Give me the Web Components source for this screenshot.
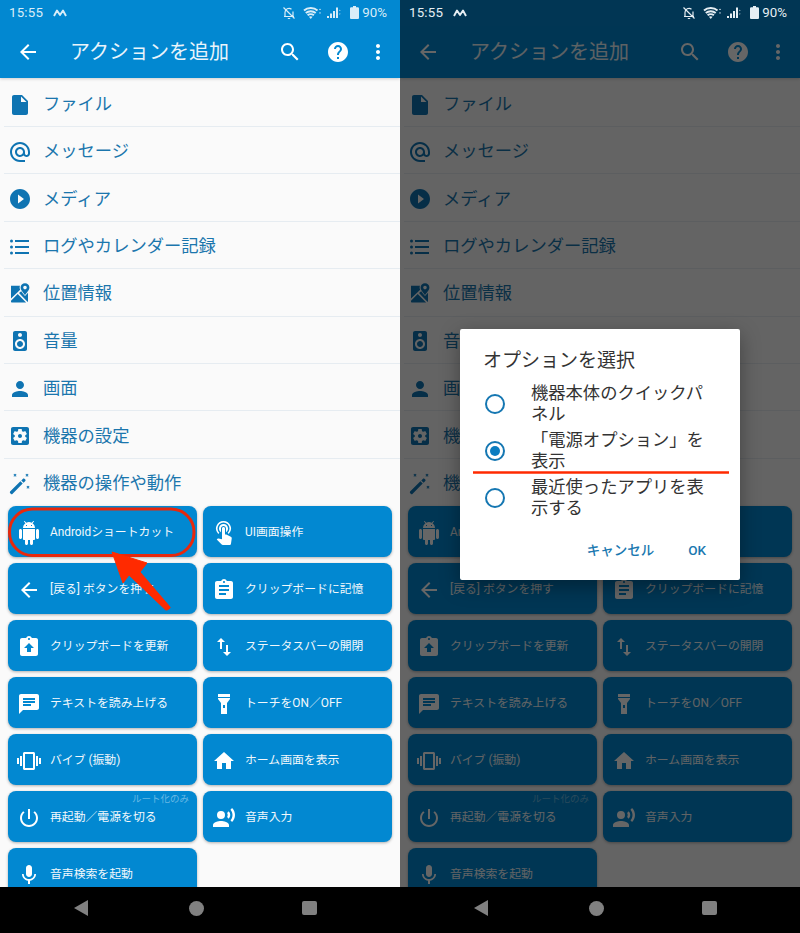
<!DOCTYPE html>
<html lang="ja">
<head>
<meta charset="utf-8">
<title>アクションを追加</title>
<style>
html,body{margin:0;padding:0;background:#000}
body{width:800px;height:933px;overflow:hidden;display:flex;font-family:Roboto,"Noto Sans CJK JP",sans-serif}
</style>
</head>
<body>
<phone-screen annotated></phone-screen>
<phone-screen dimmed></phone-screen>
<script>
const P={
back:'M20 11H7.83l5.59-5.59L12 4l-8 8 8 8 1.41-1.41L7.83 13H20v-2z',
search:'M15.5 14h-.79l-.28-.27C15.41 12.59 16 11.11 16 9.5 16 5.91 13.09 3 9.5 3S3 5.91 3 9.5 5.91 16 9.5 16c1.61 0 3.09-.59 4.23-1.57l.27.28v.79l5 4.99L20.49 19l-4.99-5zm-6 0C7.01 14 5 11.99 5 9.5S7.01 5 9.5 5 14 7.01 14 9.5 11.99 14 9.5 14z',
help:'M12 2C6.48 2 2 6.48 2 12s4.48 10 10 10 10-4.48 10-10S17.52 2 12 2zm1 17h-2v-2h2v2zm2.07-7.75l-.9.92C13.45 12.9 13 13.5 13 15h-2v-.5c0-1.1.45-2.1 1.17-2.83l1.24-1.26c.37-.36.59-.86.59-1.41 0-1.1-.9-2-2-2s-2 .9-2 2H8c0-2.21 1.79-4 4-4s4 1.79 4 4c0 .88-.36 1.68-.93 2.25z',
more:'M12 8c1.1 0 2-.9 2-2s-.9-2-2-2-2 .9-2 2 .9 2 2 2zm0 2c-1.1 0-2 .9-2 2s.9 2 2 2 2-.9 2-2-.9-2-2-2zm0 6c-1.1 0-2 .9-2 2s.9 2 2 2 2-.9 2-2-.9-2-2-2z',
file:'M6 2c-1.1 0-1.99.9-1.99 2L4 20c0 1.1.89 2 1.99 2H18c1.1 0 2-.9 2-2V8l-6-6H6zm7 7V3.5L18.5 9H13z',
at:'M12 2C6.48 2 2 6.48 2 12s4.48 10 10 10h5v-2h-5c-4.34 0-8-3.66-8-8s3.66-8 8-8 8 3.66 8 8v1.43c0 .79-.71 1.57-1.5 1.57s-1.5-.78-1.5-1.57V12c0-2.76-2.24-5-5-5s-5 2.24-5 5 2.24 5 5 5c1.38 0 2.64-.56 3.54-1.47.65.89 1.77 1.47 2.96 1.47 1.97 0 3.5-1.6 3.5-3.57V12c0-5.52-4.48-10-10-10zm0 13c-1.66 0-3-1.34-3-3s1.34-3 3-3 3 1.34 3 3-1.34 3-3 3z',
play:'M12 2C6.48 2 2 6.48 2 12s4.48 10 10 10 10-4.48 10-10S17.52 2 12 2zm-2 14.5v-9l6 4.5-6 4.5z',
list:'M3.500 4.500a1.500 1.500 0 1 1 0 3 1.500 1.500 0 0 1 0-3zm0 6a1.500 1.500 0 1 1 0 3 1.500 1.500 0 0 1 0-3zm0 6a1.500 1.500 0 1 1 0 3 1.500 1.500 0 0 1 0-3zM7 5h14v2H7zm0 6h14v2H7zm0 6h14v2H7z',
map:'M3 3.800H12c-.4.8-.5 1.600-.3 2.500.1.5.3 1 .5 1.500L3 16.500zM3 18.800 9.700 12.100 18.100 20.500H4c-.6 0-1-.4-1-1zM11 10.900 13.200 9.200C14.300 11 15.800 12.600 17 14l3-3.300V19c0 .4-.1.8-.3 1zM17 1.300c-2.500 0-4.400 1.900-4.400 4.300C12.600 8.500 17 13 17 13s4.400-4.500 4.400-7.400c0-2.400-1.900-4.300-4.400-4.300zm0 2.500a1.800 1.800 0 1 1 0 3.600 1.800 1.800 0 0 1 0-3.600z',
speaker:'M17 2H7c-1.1 0-2 .9-2 2v16c0 1.1.9 1.99 2 1.99L17 22c1.1 0 2-.9 2-2V4c0-1.1-.9-2-2-2zm-5 2c1.1 0 2 .9 2 2s-.9 2-2 2c-1.11 0-2-.9-2-2s.89-2 2-2zm0 16c-2.76 0-5-2.24-5-5s2.24-5 5-5 5 2.24 5 5-2.24 5-5 5zm0-8c-1.66 0-3 1.34-3 3s1.34 3 3 3 3-1.34 3-3-1.34-3-3-3z',
person:'M12 12c2.21 0 4-1.79 4-4s-1.79-4-4-4-4 1.79-4 4 1.79 4 4 4zm0 2c-2.67 0-8 1.34-8 4v2h16v-2c0-2.66-5.33-4-8-4z',
gear:'M12 10c-1.1 0-2 .9-2 2s.9 2 2 2 2-.9 2-2-.9-2-2-2zm7-7H5c-1.11 0-2 .9-2 2v14c0 1.1.89 2 2 2h14c1.11 0 2-.9 2-2V5c0-1.1-.89-2-2-2zm-1.750 9c0 .23-.02.46-.05.68l1.480 1.160c.13.11.17.3.08.45l-1.400 2.420c-.09.15-.27.21-.43.15l-1.740-.7c-.36.28-.76.51-1.180.69l-.26 1.850c-.03.17-.18.3-.35.3h-2.800c-.17 0-.32-.13-.35-.29l-.26-1.850c-.43-.18-.82-.41-1.180-.69l-1.740.7c-.16.06-.34 0-.43-.15l-1.400-2.420c-.09-.15-.05-.34.08-.45l1.480-1.160c-.03-.23-.05-.46-.05-.69 0-.23.02-.46.05-.68l-1.480-1.160c-.13-.11-.17-.3-.08-.45l1.400-2.420c.09-.15.27-.21.43-.15l1.740.7c.36-.28.76-.51 1.180-.69l.26-1.850c.03-.17.18-.3.35-.3h2.800c.17 0 .32.13.35.29l.26 1.850c.43.18.82.41 1.180.69l1.740-.7c.16-.06.34 0 .43.15l1.400 2.420c.09.15.05.34-.08.45l-1.480 1.160c.03.23.05.46.05.69z',
wand:'M12.400 9.300 14.700 11.600 4.400 21.900c-.4.4-1 .4-1.400 0l-.9-.9c-.4-.4-.4-1 0-1.400zM13.300 8.400l1.700-1.700c.4-.4 1-.4 1.400 0l.9.9c.4.4.4 1 0 1.400l-1.700 1.700zM5.500 2.300l.6-.6L7 2.600l.9-.9.6.6-.9.9.9.9-.6.6-.9-.9-.9.9-.6-.6.9-.9zM17.500 2.300l.6-.6.9.9.9-.9.6.6-.9.9.9.9-.6.6-.9-.9-.9.9-.6-.6.9-.9zM18.500 14.300l.6-.6.9.9.9-.9.6.6-.9.9.9.9-.6.6-.9-.9-.9.9-.6-.6.9-.9z',
android:'M6 18c0 .55.45 1 1 1h1v3.500c0 .83.67 1.500 1.500 1.500s1.500-.67 1.500-1.500V19h2v3.500c0 .83.67 1.500 1.500 1.500s1.500-.67 1.500-1.500V19h1c.55 0 1-.45 1-1V8H6v10zM3.500 8C2.670 8 2 8.670 2 9.500v7c0 .83.67 1.500 1.500 1.500S5 17.330 5 16.500v-7C5 8.670 4.330 8 3.500 8zm17 0c-.83 0-1.500.67-1.500 1.500v7c0 .83.67 1.500 1.500 1.500s1.500-.67 1.500-1.500v-7c0-.83-.67-1.500-1.500-1.500zm-4.970-5.840 1.300-1.300c.2-.2.2-.51 0-.71-.2-.2-.51-.2-.71 0l-1.480 1.480C13.850 1.230 12.950 1 12 1c-.96 0-1.860.23-2.660.63L7.850.15c-.2-.2-.51-.2-.71 0-.2.2-.2.51 0 .71l1.310 1.310C6.970 3.260 6 5.010 6 7h12c0-1.990-.97-3.750-2.470-4.840zM10 5H9V4h1v1zm5 0h-1V4h1v1z',
touch:'M11.500 0a7.500 7.500 0 0 1 5.200 12.900l-1-1.200a6 6 0 1 0-8.400 0l-1 1.200A7.500 7.500 0 0 1 11.500 0zM9 11.240V7.500C9 6.120 10.120 5 11.500 5S14 6.120 14 7.500v3.740c1.210-.81 2-2.180 2-3.740C16 5.010 13.990 3 11.500 3S7 5.010 7 7.500c0 1.560.79 2.930 2 3.740zm9.840 4.630-4.540-2.260c-.17-.07-.35-.11-.54-.11H13v-6c0-.83-.67-1.500-1.500-1.500S10 6.670 10 7.500v10.740l-3.430-.72c-.08-.01-.15-.03-.24-.03-.31 0-.59.13-.79.33l-.79.8 4.940 4.940c.27.27.65.44 1.060.44h6.790c.75 0 1.330-.55 1.440-1.280l.75-5.270c.01-.07.02-.14.02-.2 0-.62-.38-1.160-.91-1.380z',
clip:'M19 3h-4.180C14.400 1.840 13.300 1 12 1c-1.300 0-2.400.84-2.820 2H5c-1.100 0-2 .9-2 2v14c0 1.100.9 2 2 2h14c1.100 0 2-.9 2-2V5c0-1.100-.9-2-2-2zm-7 0c.55 0 1 .45 1 1s-.45 1-1 1-1-.45-1-1 .45-1 1-1zm2 14H7v-2h7v2zm3-4H7v-2h10v2zm0-4H7V7h10v2z',
clipup:'M19 3h-4.180C14.400 1.840 13.300 1 12 1c-1.300 0-2.400.84-2.820 2H5c-1.100 0-2 .9-2 2v14c0 1.100.9 2 2 2h14c1.100 0 2-.9 2-2V5c0-1.100-.9-2-2-2zm-7 0c.55 0 1 .45 1 1s-.45 1-1 1-1-.45-1-1 .45-1 1-1zM12 8l5 5h-3v4h-4v-4H7z',
swap:'M16 17.010V10h-2v7.010h-3L15 21l4-3.990h-3zM9 3 5 6.990h3V14h2V6.990h3L9 3z',
chat:'M20 2H4c-1.100 0-1.990.9-1.990 2L2 22l4-4h14c1.100 0 2-.9 2-2V4c0-1.100-.9-2-2-2zM6 9h12v2H6V9zm8 5H6v-2h8v2zm4-6H6V6h12v2z',
torch:'M6 2h12v3H6V2zm0 4h12v1l-3 4v11H9V11L6 7V6zm5 7v3h2v-3h-2z',
vib:'M0 15h2V9H0v6zm3 2h2V7H3v10zm19-8v6h2V9h-2zm-3 8h2V7h-2v10zM16.500 3h-9C6.670 3 6 3.670 6 4.500v15c0 .83.67 1.500 1.500 1.500h9c.83 0 1.500-.67 1.500-1.500v-15c0-.83-.67-1.500-1.500-1.500zM16 19H8V5h8v14z',
home:'M10 20v-6h4v6h5v-8h3L12 3 2 12h3v8z',
power:'M13 3h-2v10h2V3zm4.830 2.170-1.420 1.420C17.990 7.860 19 9.810 19 12c0 3.870-3.130 7-7 7s-7-3.130-7-7c0-2.190 1.010-4.140 2.580-5.420L6.170 5.170C4.230 6.820 3 9.260 3 12c0 4.970 4.030 9 9 9s9-4.030 9-9c0-2.740-1.230-5.180-3.170-6.830z',
voice:'M5 9a4 4 0 1 0 8 0 4 4 0 0 0-8 0zM9 15c-2.670 0-8 1.340-8 4v2h16v-2c0-2.660-5.330-4-8-4zm7.760-9.640-1.680 1.690c.84 1.180.84 2.710 0 3.890l1.680 1.690c2.020-2.020 2.020-5.070 0-7.270zM20.070 2l-1.630 1.630c2.770 3.020 2.770 7.560 0 10.740L20.070 16c3.900-3.890 3.910-9.950 0-14z',
mic:'M12 14c1.660 0 2.990-1.340 2.990-3L15 5c0-1.660-1.340-3-3-3S9 3.340 9 5v6c0 1.660 1.340 3 3 3zm5.300-3c0 3-2.540 5.100-5.300 5.100S6.700 14 6.700 11H5c0 3.410 2.720 6.230 6 6.720V21h2v-3.280c3.280-.48 6-3.300 6-6.720h-1.700z'
};

class AppIcon extends HTMLElement{
  connectedCallback(){
    if(this.shadowRoot)return;
    const s=this.getAttribute('size')||24;
    this.attachShadow({mode:'open'}).innerHTML=`<style>:host{display:inline-flex;flex:none;width:${s}px;height:${s}px}svg{display:block;width:100%;height:100%;fill:currentColor}</style><svg viewBox="0 0 24 24"><path fill-rule="evenodd" d="${P[this.getAttribute('name')]}"/></svg>`;
  }
}
customElements.define('app-icon',AppIcon);

class StatusBar extends HTMLElement{
  connectedCallback(){
    if(this.shadowRoot)return;
    this.attachShadow({mode:'open'}).innerHTML=`<style>
:host{display:flex;align-items:center;height:26px;box-sizing:border-box;padding:0 13px 1px 9px;background:var(--status-bg);color:var(--status-fg);font:400 13.300px/1 Roboto,sans-serif}
svg{display:block;flex:none}
.t{letter-spacing:.2px}
.m{margin-left:10px}
.sp{flex:1}
.b{margin-right:7px}
.w{margin-right:5px}
.s{margin-right:9px}
.c{margin-right:3px}
</style>
<span class="t">15:55</span>
<svg class="m" width="14" height="8" viewBox="0 0 14 8" fill="none" stroke="currentColor" stroke-width="1.900" stroke-linejoin="round"><path d="M1 7 4 1.500 7 6 10 1.500 13 7"/></svg>
<span class="sp"></span>
<svg class="b" width="14" height="14" viewBox="0 0 14 14" fill="none" stroke="currentColor" stroke-width="1.200"><path d="M3 10.500V6.500A4 4 0 0 1 9.500 3.300M11 5.500V10.500H3.500M2 10.500H12M5.800 12.500H8.200M1.500 1.500 12.500 12.500"/></svg>
<svg class="w" width="19" height="14" viewBox="0 0 19 14" fill="none" stroke="currentColor" stroke-width="1.900"><path d="M1 4.500C4.500 1.200 11 1.200 14.500 4.500M2.800 7C5.500 4.600 10 4.600 12.700 7M4.600 9.300C6.300 7.900 9.200 7.900 10.900 9.300"/><path d="M7.750 13 5.900 10.800C7 10 8.500 10 9.600 10.800Z" fill="currentColor" stroke="none"/><path d="M17 2.500 16 4H18ZM17 8 16 6.500H18Z" fill="currentColor" stroke="none"/></svg>
<svg class="s" width="14" height="13" viewBox="0 0 14 13" fill="currentColor"><path d="M0 12h2V10H0zM3 12h2V7.500H3zM6 12h2V5H6zM9 12h2V1.500H9z"/><path d="M12.800 3.500 12 5h1.600zM12.800 9 12 7.500h1.600z" opacity=".7"/></svg>
<svg class="c" width="9" height="13" viewBox="0 0 9 13" fill="currentColor"><path d="M3 0h3v1.300h1.500c.8 0 1.500.5 1.500 1.200V12c0 .6-.7 1-1.500 1h-6C.7 13 0 12.600 0 12V2.500c0-.7.7-1.200 1.500-1.200H3z"/></svg>
<span>90%</span>`;
  }
}
customElements.define('status-bar',StatusBar);

class AppBar extends HTMLElement{
  connectedCallback(){
    if(this.shadowRoot)return;
    this.attachShadow({mode:'open'}).innerHTML=`<style>
:host{display:flex;align-items:center;height:52px;box-sizing:border-box;padding:0 10px 0 16px;background:#0288d1;color:#fff;box-shadow:0 1px 3px rgba(0,0,0,.18);position:relative;z-index:1}
.title{margin-left:30px;flex:1;font-size:20px;font-weight:400;line-height:1;white-space:nowrap;color:#e9f4fb}
.s{margin-right:24px}
.h{margin-right:16px}
</style>
<app-icon name="back"></app-icon>
<span class="title"><slot></slot></span>
<app-icon class="s" name="search"></app-icon>
<app-icon class="h" name="help"></app-icon>
<app-icon name="more"></app-icon>`;
  }
}
customElements.define('app-bar',AppBar);

class ListRow extends HTMLElement{
  connectedCallback(){
    if(this.shadowRoot)return;
    this.attachShadow({mode:'open'}).innerHTML=`<style>
:host{display:flex;align-items:center;height:47.400px;box-sizing:border-box;padding-top:3.500px;margin-left:4px;border-bottom:1px solid #e6ecf1;color:#1b76ad;font-size:17.300px;line-height:1;white-space:nowrap}
:host([last]){border-bottom:0;padding-top:2.500px}
app-icon{margin:0 11px 0 4px;color:#0f74b2}
</style>
<app-icon size="24" name="${this.getAttribute('icon')}"></app-icon><span><slot></slot></span>`;
  }
}
customElements.define('list-row',ListRow);

class ActionButton extends HTMLElement{
  connectedCallback(){
    if(this.shadowRoot)return;
    const note=this.getAttribute('note');
    this.attachShadow({mode:'open'}).innerHTML=`<style>
:host{display:flex;align-items:center;position:relative;height:51px;box-sizing:border-box;padding:2px 0 0 9px;border-radius:8px;background:#0288d1;color:#f2f8fc;font-size:11.850px;line-height:1;white-space:nowrap;box-shadow:0 1px 3px rgba(0,0,0,.3)}
app-icon{margin-right:9px;color:#fff}
.note{position:absolute;right:8px;top:3px;font-size:9.500px;color:#68b8e4}
</style>
<app-icon name="${this.getAttribute('icon')}"></app-icon><span><slot></slot></span>${note?`<span class="note">${note}</span>`:''}`;
  }
}
customElements.define('action-button',ActionButton);

class OptionRadio extends HTMLElement{
  connectedCallback(){
    if(this.shadowRoot)return;
    this.attachShadow({mode:'open'}).innerHTML=`<style>
:host{display:flex;align-items:center;height:47px;color:#333;font-size:17.300px;line-height:21px}
.r{flex:none;width:20px;height:20px;box-sizing:border-box;border:2px solid #1577b2;border-radius:50%;display:flex;align-items:center;justify-content:center;margin-right:26px}
:host([checked]) .r::after{content:"";width:10px;height:10px;border-radius:50%;background:#0a7cc0}
.l{flex:1;min-width:0}
</style>
<span class="r"></span><span class="l"><slot></slot></span>`;
  }
}
customElements.define('option-radio',OptionRadio);

class OptionDialog extends HTMLElement{
  connectedCallback(){
    if(this.shadowRoot)return;
    this.attachShadow({mode:'open'}).innerHTML=`<style>
:host{display:block;width:280px;height:251px;box-sizing:border-box;background:#fff;border-radius:2px;box-shadow:0 6px 20px rgba(0,0,0,.35);padding:20px 24px 0 23px}
h2{margin:0 0 7px;font-size:19px;font-weight:400;line-height:24px;color:#333;white-space:nowrap}
.opts{margin-left:2px;margin-right:2px}
.acts{display:flex;justify-content:flex-end;gap:34px;margin-top:19px;margin-right:10px;font-size:13.500px;font-weight:500;line-height:20px;color:#1a78b0;white-space:nowrap}
</style>
<h2>オプションを選択</h2>
<div class="opts">
<option-radio>機器本体のクイックパネル</option-radio>
<option-radio checked>「電源オプション」を表示</option-radio>
<option-radio>最近使ったアプリを表示する</option-radio>
</div>
<div class="acts"><span>キャンセル</span><span>OK</span></div>`;
  }
}
customElements.define('option-dialog',OptionDialog);

class NavBar extends HTMLElement{
  connectedCallback(){
    if(this.shadowRoot)return;
    this.attachShadow({mode:'open'}).innerHTML=`<style>
:host{display:flex;flex:none;align-items:center;height:46px;background:#000;box-sizing:border-box;padding:0 0 4px 74px;position:relative;z-index:3}
.t{width:0;height:0;border-style:solid;border-width:8.500px 14px 8.500px 0;border-color:transparent #808080 transparent transparent}
.c{width:15px;height:15px;border-radius:50%;background:#808080;margin-left:100.500px}
.s{width:15px;height:14px;border-radius:2px;background:#808080;margin-left:98.500px}
</style>
<span class="t"></span><span class="c"></span><span class="s"></span>`;
  }
}
customElements.define('nav-bar',NavBar);

const ROWS=[['file','ファイル'],['at','メッセージ'],['play','メディア'],['list','ログやカレンダー記録'],['map','位置情報'],['speaker','音量'],['person','画面'],['gear','機器の設定'],['wand','機器の操作や動作']];
const BTNS=[['android','Androidショートカット'],['touch','UI画面操作'],['back','[戻る] ボタンを押す'],['clip','クリップボードに記憶'],['clipup','クリップボードを更新'],['swap','ステータスバーの開閉'],['chat','テキストを読み上げる'],['torch','トーチをON／OFF'],['vib','バイブ (振動)'],['home','ホーム画面を表示'],['power','再起動／電源を切る','ルート化のみ'],['voice','音声入力'],['mic','音声検索を起動']];

class PhoneScreen extends HTMLElement{
  connectedCallback(){
    if(this.shadowRoot)return;
    const dim=this.hasAttribute('dimmed'),ann=this.hasAttribute('annotated');
    const rows=ROWS.map((r,i)=>`<list-row icon="${r[0]}"${i===ROWS.length-1?' last':''}>${r[1]}</list-row>`).join('');
    const btns=BTNS.map(b=>`<action-button icon="${b[0]}"${b[2]?` note="${b[2]}"`:''}>${b[1]}</action-button>`).join('');
    this.attachShadow({mode:'open'}).innerHTML=`<style>
:host{display:flex;flex-direction:column;flex:none;width:400px;height:933px;position:relative;overflow:hidden;--status-bg:${dim?'#013654':'#0288d1'};--status-fg:${dim?'#e6eef3':'#d9edf8'}}
.body{flex:1;min-height:0;position:relative;display:flex;flex-direction:column;overflow:hidden;background:#fafafa}
.content{flex:1;min-height:0;overflow:hidden;background:#fafafa}
.rows{padding-top:1.600px}
.grid{display:grid;grid-template-columns:189px 189px;gap:6px;padding:0 8px 8px}
.scrim{position:absolute;inset:0;background:rgba(0,0,0,.6);z-index:2;display:flex;align-items:flex-start;justify-content:center;padding-top:303px;box-sizing:border-box}
.ink{position:absolute;left:0;top:0;width:400px;height:933px;z-index:4;pointer-events:none}
</style>
<status-bar></status-bar>
<div class="body">
<app-bar>アクションを追加</app-bar>
<div class="content">
<div class="rows">${rows}</div>
<div class="grid">${btns}</div>
</div>
${dim?'<div class="scrim"><option-dialog></option-dialog></div>':''}
</div>
<nav-bar></nav-bar>
${ann?`<svg class="ink" viewBox="0 0 400 933"><rect x="9.500" y="509" width="184.500" height="46.500" rx="23" fill="none" stroke="#e8280c" stroke-width="3"/><path d="M112 552 147 563 140 572 170 607c.8 1.200-3 3.800-4.500 2.800L129 575 123 583Z" fill="#ff2a00" stroke="#ff2a00" stroke-width="1" stroke-linejoin="round"/></svg>`:''}
${dim?`<svg class="ink" viewBox="0 0 400 933"><path d="M73 472.500H329" stroke="#ff2a00" stroke-width="2.500" fill="none"/></svg>`:''}`;
  }
}
customElements.define('phone-screen',PhoneScreen);
</script>
</body>
</html>
